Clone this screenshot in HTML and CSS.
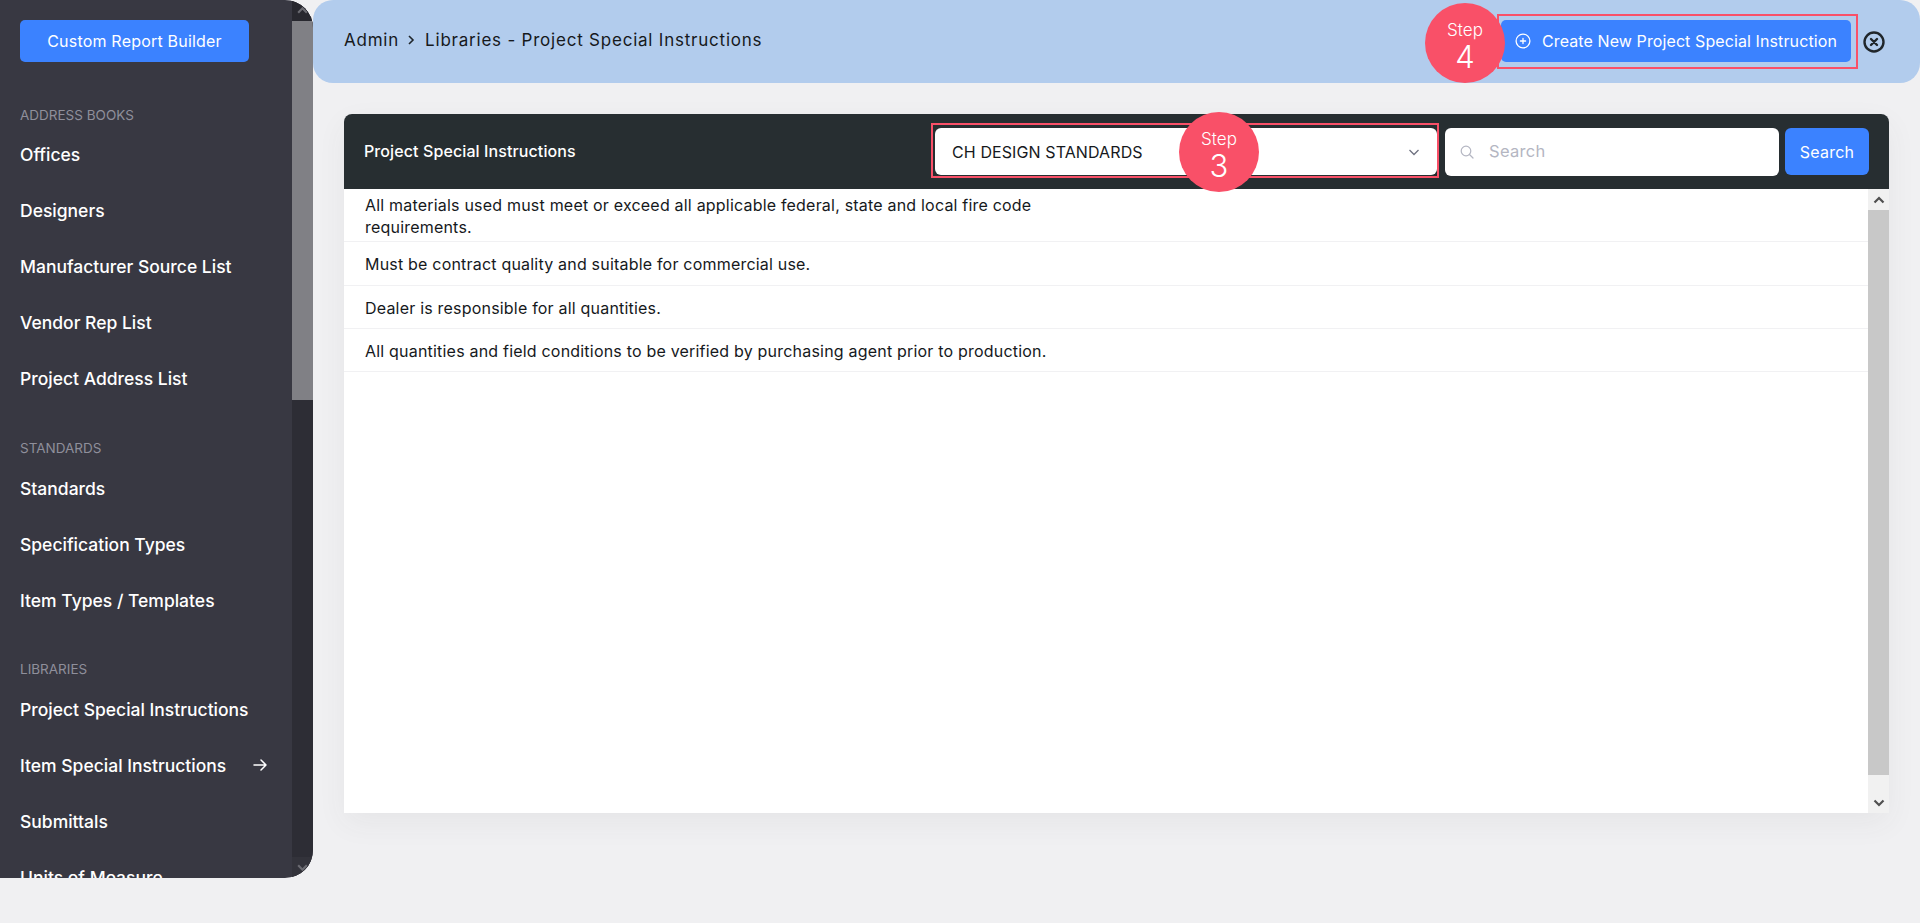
FILE: index.html
```html
<!DOCTYPE html>
<html lang="en">
<head>
  <meta charset="UTF-8">
  <title>Libraries - Project Special Instructions</title>
  <link rel="stylesheet" href="styles.css">
</head>
<body>
  <aside class="sidebar">
    <div class="sidebar-body">
      <button class="btn btn-report">Custom Report Builder</button>

      <h6 class="nav-label nav-label-first">ADDRESS BOOKS</h6>
      <a class="nav-link">Offices</a>
      <a class="nav-link">Designers</a>
      <a class="nav-link">Manufacturer Source List</a>
      <a class="nav-link">Vendor Rep List</a>
      <a class="nav-link">Project Address List</a>

      <h6 class="nav-label">STANDARDS</h6>
      <a class="nav-link">Standards</a>
      <a class="nav-link">Specification Types</a>
      <a class="nav-link">Item Types / Templates</a>

      <h6 class="nav-label nav-label-last">LIBRARIES</h6>
      <a class="nav-link">Project Special Instructions</a>
      <a class="nav-link">Item Special Instructions
        <svg class="nav-arrow" viewBox="0 0 16 16" fill="none" stroke="#fff" stroke-width="1.5" stroke-linecap="round" stroke-linejoin="round"><path d="M2 8h12M9 3l5 5-5 5"/></svg>
      </a>
      <a class="nav-link">Submittals</a>
      <a class="nav-link">Units of Measure</a>
    </div>
    <div class="side-scroll">
      <div class="side-scroll-btn">
        <svg viewBox="0 0 12 12" fill="none" stroke="#6b6b72" stroke-width="2"><path d="M2 8l4-4 4 4"/></svg>
      </div>
      <div class="side-scroll-thumb"></div>
      <div class="side-scroll-btn side-scroll-end">
        <svg viewBox="0 0 12 12" fill="none" stroke="#6b6b72" stroke-width="2"><path d="M2 4l4 4 4-4"/></svg>
      </div>
    </div>
  </aside>

  <main class="main">
    <header class="topbar">
      <div class="crumbs">
        <span>Admin</span>
        <svg class="crumb-sep" viewBox="0 0 10 12" fill="none" stroke="#20262b" stroke-width="1.6"><path d="M3 2l4 4-4 4"/></svg>
        <span>Libraries - Project Special Instructions</span>
      </div>
      <div class="step-box step-box-create">
        <button class="btn btn-create">
          <svg class="plus-icon" viewBox="0 0 16 16" fill="none" stroke="#fff" stroke-width="1.3" stroke-linecap="round"><circle cx="8" cy="8" r="6.9"/><path d="M8 5.4v5.2M5.4 8h5.2"/></svg>
          Create New Project Special Instruction
        </button>
        <div class="step step-four"><span class="step-word">Step</span><span class="step-num">4</span></div>
      </div>
      <svg class="close-icon" viewBox="0 0 22 22" fill="none" stroke="#20262b" stroke-width="2.4" stroke-linecap="round"><circle cx="11" cy="11" r="9.5"/><path d="M8 8l6 6M14 8l-6 6"/></svg>
    </header>

    <section class="card">
      <div class="card-head">
        <div class="card-title">Project Special Instructions</div>
        <div class="step-box step-box-select">
          <div class="select">
            <span>CH DESIGN STANDARDS</span>
            <svg class="select-arrow" viewBox="0 0 12 12" fill="none" stroke="#6f7280" stroke-width="1.3"><path d="M1.5 4l4.5 4.500 4.500-4.500"/></svg>
          </div>
          <div class="step step-three"><span class="step-word">Step</span><span class="step-num">3</span></div>
        </div>
        <div class="search-input">
          <svg class="search-icon" viewBox="0 0 14 14" fill="none" stroke="#b4b6c2" stroke-width="1.2" stroke-linecap="round"><circle cx="6" cy="6" r="4.800"/><path d="M9.500 9.500l3.500 3.500"/></svg>
          <span>Search</span>
        </div>
        <button class="btn btn-search">Search</button>
      </div>

      <div class="card-body">
        <div class="rows">
          <div class="row row-first"><div class="row-text">All materials used must meet or exceed all applicable federal, state and local fire code requirements.</div></div>
          <div class="row"><div class="row-text">Must be contract quality and suitable for commercial use.</div></div>
          <div class="row row-short"><div class="row-text">Dealer is responsible for all quantities.</div></div>
          <div class="row row-short"><div class="row-text">All quantities and field conditions to be verified by purchasing agent prior to production.</div></div>
        </div>
        <div class="card-scroll">
          <div class="card-scroll-btn">
            <svg viewBox="0 0 12 12" fill="none" stroke="#505050" stroke-width="2.200"><path d="M1.500 8.500L6 4l4.500 4.500"/></svg>
          </div>
          <div class="card-scroll-thumb"></div>
          <div class="card-scroll-btn card-scroll-end">
            <svg viewBox="0 0 12 12" fill="none" stroke="#505050" stroke-width="2.200"><path d="M1.500 3.500L6 8l4.500-4.500"/></svg>
          </div>
        </div>
      </div>
    </section>
  </main>
</body>
</html>
```

FILE: styles.css
```css
* {
  box-sizing: border-box;
}

html,
body {
  height: 100%;
}

body {
  margin: 0;
  display: flex;
  align-items: flex-start;
  overflow: hidden;
  background: #f0f0f2;
  color: #16191c;
  font-family: Inter, "Liberation Sans", sans-serif;
}

svg {
  display: block;
}

.btn {
  border: none;
  border-radius: 5px;
  background: #3b82ff;
  color: #fff;
  font-family: inherit;
  font-size: 16px;
  letter-spacing: 0.2px;
}

/* sidebar */
.sidebar {
  display: flex;
  flex: 0 0 313px;
  height: 878px;
  border-radius: 0 28px 28px 0;
  background: #383842;
  overflow: hidden;
}

.sidebar-body {
  flex: 1;
  padding: 20px 24px 0 20px;
  overflow: hidden;
}

.btn-report {
  display: block;
  width: 229px;
  height: 42px;
}

.nav-label {
  margin: 31px 0 0;
  color: #8f8f9b;
  font-size: 13.5px;
  font-weight: 400;
  line-height: 23px;
}

.nav-label-first {
  margin-top: 42px;
  line-height: 22px;
}

.nav-label-last {
  margin-top: 30px;
}

.nav-link {
  display: flex;
  align-items: center;
  justify-content: space-between;
  height: 56px;
  color: #fff;
  font-size: 17.5px;
  font-weight: 500;
  white-space: nowrap;
}

.nav-arrow {
  width: 16px;
  height: 16px;
}

.side-scroll {
  display: flex;
  flex-direction: column;
  flex: 0 0 21px;
  background: #2d2d35;
}

.side-scroll-btn {
  height: 21px;
  padding: 4px;
  background: #28282f;
}

.side-scroll-thumb {
  height: 379px;
  background: #808085;
}

.side-scroll-end {
  margin-top: auto;
  background: #33333b;
}

/* main area */
.main {
  flex: 1;
  min-width: 0;
}

.topbar {
  position: relative;
  display: flex;
  align-items: center;
  height: 83px;
  padding: 0 35px 0 31px;
  border-radius: 20px;
  background: #b2cced;
}

.crumbs {
  display: flex;
  align-items: center;
  margin-right: auto;
  padding-bottom: 3px;
  font-size: 17px;
  letter-spacing: 0.78px;
}

.crumb-sep {
  width: 10px;
  height: 12px;
  margin: 0 9px 0 7px;
}

.step-box {
  position: relative;
  border: 2px solid #f95068;
}

.step-box-create {
  display: flex;
  align-items: center;
  width: 361px;
  height: 55px;
  margin-top: -1px;
  padding-left: 2px;
}

.btn-create {
  display: flex;
  align-items: center;
  width: 350px;
  height: 42px;
  padding-left: 14px;
  letter-spacing: 0.1px;
  white-space: nowrap;
}

.plus-icon {
  width: 16px;
  height: 16px;
  margin-right: 11px;
}

.close-icon {
  width: 22px;
  height: 22px;
  margin-left: 5px;
}

.step {
  position: absolute;
  display: flex;
  flex-direction: column;
  align-items: center;
  justify-content: center;
  width: 80px;
  height: 80px;
  padding-top: 6px;
  border-radius: 50%;
  background: #f95068;
  color: #fff;
  font-weight: 300;
}

.step-word {
  font-size: 17px;
  line-height: 22px;
}

.step-num {
  font-size: 31px;
  line-height: 32px;
}

.step-four {
  top: -13px;
  left: -74px;
}

.step-three {
  top: -13px;
  left: 246px;
}

/* card */
.card {
  margin: 31px 31px 0;
  border-radius: 8px 8px 0 0;
  box-shadow: 0 10px 30px rgba(60, 60, 70, 0.06);
  background: #fff;
}

.card-head {
  display: flex;
  align-items: center;
  height: 75px;
  padding: 0 20px;
  border-radius: 8px 8px 0 0;
  background: #272e31;
}

.card-title {
  margin-right: auto;
  padding-bottom: 2px;
  color: #fff;
  font-size: 16px;
  font-weight: 500;
  letter-spacing: 0.1px;
}

.step-box-select {
  width: 508px;
  height: 55px;
  margin-bottom: 2px;
  padding: 3px 0 3px 2px;
}

.select {
  display: flex;
  align-items: center;
  justify-content: space-between;
  height: 47px;
  padding: 0 17px;
  border-radius: 6px;
  background: #fff;
  font-size: 16px;
  letter-spacing: 0.1px;
}

.select-arrow {
  width: 12px;
  height: 12px;
}

.search-input {
  display: flex;
  align-items: center;
  width: 334px;
  height: 48px;
  margin: 0 6px;
  padding: 0 0 2px 15px;
  border-radius: 6px;
  background: #fff;
  color: #b4b6c2;
  font-size: 16.5px;
  letter-spacing: 0.300px;
}

.search-icon {
  width: 14px;
  height: 14px;
  margin: 2px 15px 0 0;
}

.btn-search {
  width: 84px;
  height: 47px;
  border-radius: 6px;
}

.card-body {
  display: flex;
  height: 624px;
}

.rows {
  flex: 1;
}

.row {
  height: 44px;
  padding-top: 11px;
  border-bottom: 1px solid #f1f1f3;
  font-size: 16px;
  letter-spacing: 0.2px;
  line-height: 22px;
}

.row-first {
  height: 53px;
  padding-top: 5px;
}

.row-short {
  height: 43px;
}

.row-text {
  width: 730px;
  padding-left: 21px;
}

.card-scroll {
  display: flex;
  flex-direction: column;
  flex: 0 0 21px;
  background: #f1f1f1;
}

.card-scroll-btn {
  height: 21px;
  padding: 4.500px;
}

.card-scroll-thumb {
  height: 565px;
  background: #c8c8c8;
}

.card-scroll-end {
  margin-top: auto;
}
```
